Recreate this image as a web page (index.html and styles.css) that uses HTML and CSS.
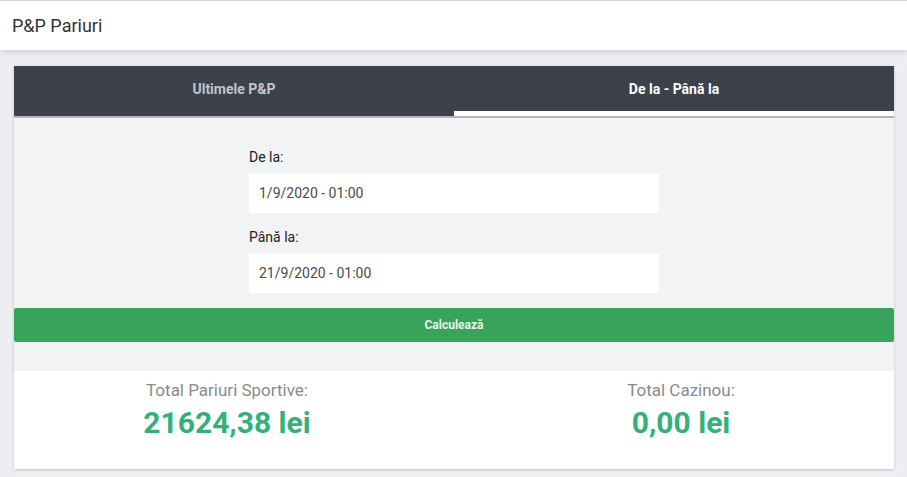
FILE: index.html
```html
<!DOCTYPE html>
<html lang="ro">
<head>
<meta charset="utf-8">
<title>P&amp;P Pariuri</title>
<link rel="stylesheet" href="styles.css">
</head>
<body>
<header class="topbar">P&amp;P Pariuri</header>
<main class="page">
  <section class="card">
    <nav class="tabs">
      <div class="tab">Ultimele P&amp;P</div>
      <div class="tab tab-active">De la - Până la</div>
    </nav>
    <div class="form-area">
      <div class="form">
        <label class="field-label">De la:</label>
        <div class="field">1/9/2020 - 01:00</div>
        <label class="field-label field-label-second">Până la:</label>
        <div class="field">21/9/2020 - 01:00</div>
      </div>
      <button class="calc-btn">Calculează</button>
    </div>
    <div class="stats">
      <div class="stat">
        <div class="stat-label">Total Pariuri Sportive:</div>
        <div class="stat-value">21624,38 lei</div>
      </div>
      <div class="stat">
        <div class="stat-label">Total Cazinou:</div>
        <div class="stat-value">0,00 lei</div>
      </div>
    </div>
  </section>
</main>
</body>
</html>
```
FILE: styles.css
```css
* { box-sizing: border-box; }
html, body { margin: 0; padding: 0; }
body {
  background: #eceef2;
  font-family: Roboto, "Liberation Sans", Arial, sans-serif;
  width: 907px;
  height: 477px;
  overflow: hidden;
}
.topbar {
  height: 50px;
  background: #fff;
  border-top: 1px solid #d6d6d6;
  box-shadow: 0 2px 6px rgba(0,0,0,0.13);
  padding-left: 12px;
  font-size: 18px;
  color: #333;
  line-height: 50px;
  position: relative;
}
.page {
  padding: 16px 13px 0 14px;
}
.card {
  box-shadow: 0 1px 3px rgba(0,0,0,0.18);
}
.tabs {
  display: flex;
  height: 52px;
  background: #3c414b;
  border-bottom: 2px solid #b4b6bb;
}
.tab {
  flex: 1;
  display: flex;
  align-items: center;
  justify-content: center;
  padding-bottom: 4px;
  font-size: 14px;
  font-weight: 700;
  color: #c2c5ca;
}
.tab-active {
  color: #fff;
  box-shadow: inset 0 -5px 0 #fff;
}
.form-area {
  background: #f2f3f5;
  padding-top: 29px;
  padding-bottom: 29px;
}
.form {
  width: 410px;
  margin: 0 auto;
  display: flex;
  flex-direction: column;
}
.field-label {
  font-size: 14px;
  line-height: 20px;
  color: #222;
  margin-bottom: 6px;
}
.field-label-second { margin-top: 14px; }
.field {
  height: 40px;
  background: #fff;
  padding-left: 10px;
  font-size: 14px;
  line-height: 40px;
  color: #4a4a4a;
}
.calc-btn {
  display: block;
  width: 100%;
  margin-top: 15px;
  height: 34px;
  border: 0;
  border-radius: 2px;
  background: #38a35b;
  color: #e6f7e9;
  font-family: Roboto, "Liberation Sans", Arial, sans-serif;
  font-size: 12px;
  font-weight: 700;
}
.stats {
  display: flex;
  gap: 28px;
  background: #fff;
  height: 98px;
  padding-top: 8px;
}
.stat {
  flex: 1;
  text-align: center;
}
.stat-label {
  font-size: 17px;
  line-height: 22px;
  color: #8a8a8a;
  font-weight: 400;
}
.stat-value {
  margin-top: 4px;
  font-size: 30px;
  line-height: 36px;
  font-weight: 700;
  color: #35b07b;
}
```
